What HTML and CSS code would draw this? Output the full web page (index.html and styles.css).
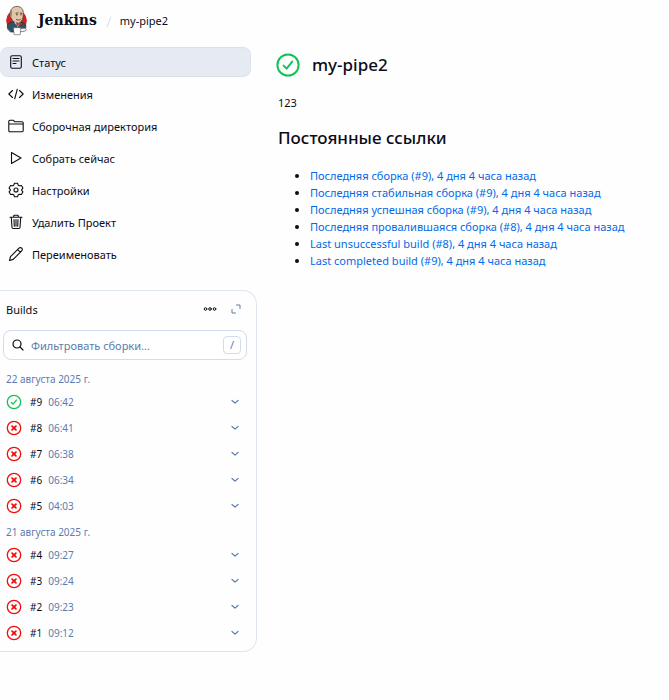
FILE: index.html
```html
<!DOCTYPE html>
<html lang="ru">
<head>
<meta charset="utf-8">
<meta name="viewport" content="width=device-width, initial-scale=1">
<title>my-pipe2 [Jenkins]</title>
<link rel="stylesheet" href="styles.css">
</head>
<body>
<svg class="sprite" aria-hidden="true">
  <symbol id="ok" viewBox="0 0 24 24"><circle cx="12" cy="12" r="10.6"/><path d="M7.6 12.6l3 3 5.6-7"/></symbol>
  <symbol id="fail" viewBox="0 0 16 16"><circle cx="8" cy="8" r="6.7"/><path class="cross" d="M6.100 6.100l3.800 3.800M9.900 6.100l-3.800 3.800"/></symbol>
  <symbol id="ok-small" viewBox="0 0 16 16"><circle cx="8" cy="8" r="6.7"/><path d="M5.400 8.500l1.700 1.600 3.300-4"/></symbol>
  <symbol id="chevron" viewBox="0 0 8 8"><path d="M1 2.500l3 2.600 3-2.600"/></symbol>
</svg>
<header class="header">
  <a class="brand" href="#">
    <svg class="logo" viewBox="0 0 24 32" aria-hidden="true">
      <ellipse cx="12" cy="16" rx="10.8" ry="11" fill="#d3221d"/>
      <path d="M3 25c-1.500-3-.5-6 3-7l5-1 7 1c3 1 4.500 3 3.500 6l-4 3-5 1H6z" fill="#2f5468" stroke="#1c2e3a" stroke-width=".7"/>
      <path d="M5.300 10C5 4.500 8 1.300 12.500 1.300c4.500 0 7 3.200 6.600 8.200-.2 4-1.100 8-4.600 9-3.500.5-7-1.500-8-5-1-.5-1.500-2-1.200-3.500z" fill="#e3c6a6" stroke="#4a403a" stroke-width=".8"/>
      <path d="M5.300 10c.2-2.500 1-4.500 2-5.500.3 2 .1 4-.3 6l-.3 3c-1-.7-1.500-2-1.400-3.500z" fill="#92867b"/>
      <path d="M11.500 8.500l2-.5M16 8.300l1.500.2M12 10h1M16.300 10h.8M12 15c1.300.8 2.700.8 4 0" fill="none" stroke="#3d302a" stroke-width=".9"/>
      <path d="M9.500 17.500l3.500 5 4-4" fill="#f0f0f0"/>
      <path d="M12 18.200l2.500 1 3-1.200.4 3-3-.8-2.500 1.200z" fill="#d33833" stroke="#641b19" stroke-width=".5"/>
      <path d="M9 23.500h7.500l-.6 7.300h-6z" fill="#fff" stroke="#66666b" stroke-width=".7"/>
      <path d="M16.500 24.500c3-1 5.500-.5 6 1-1 2-4 2.500-6.500 2" fill="#f4f0ea" stroke="#5e5752" stroke-width=".7"/>
    </svg>
    <span class="brand-name">Jenkins</span>
  </a>
  <svg class="slash" viewBox="0 0 6 12" aria-hidden="true"><path d="M5 1L1 11"/></svg>
  <a class="crumb" href="#">my-pipe2</a>
</header>
<div class="layout">
  <aside class="side">
    <nav class="tasks">
      <a class="task active" href="#"><svg viewBox="0 0 16 16"><rect x="2.700" y="1.700" width="10.600" height="12.600" rx="1.500"/><path d="M5 4.500h6M5 7h6M5 9.500h3"/></svg>Статус</a>
      <a class="task" href="#"><svg viewBox="0 0 16 16"><path d="M4.500 4.500L.8 8l3.700 3.500M11.500 4.500l3.700 3.500-3.700 3.500M9.300 3.200l-2.600 9.600"/></svg>Изменения</a>
      <a class="task" href="#"><svg viewBox="0 0 16 16"><path d="M.8 12.500v-9c0-.8.500-1.200 1.200-1.200h3.500l1.500 1.500h7c.7 0 1.200.5 1.200 1.200v7.500c0 .8-.5 1.200-1.200 1.200H2c-.7 0-1.200-.5-1.200-1.200zM.8 6h14.400"/></svg>Сборочная директория</a>
      <a class="task" href="#"><svg viewBox="0 0 16 16"><path d="M3.500 2.600v10.800L13 8z"/></svg>Собрать сейчас</a>
      <a class="task" href="#"><svg viewBox="0 0 16 16"><path d="M6.500 1.300h3l.8 1.900 1.100.6 2-.3 1.500 2.600L13.700 7.700v.6l1.200 1.600-1.500 2.600-2-.3-1.100.6-.8 1.900h-3l-.8-1.900-1.100-.6-2 .3-1.500-2.600 1.200-1.600v-.6L1.100 6.100l1.500-2.600 2 .3 1.100-.6z"/><circle cx="8" cy="8" r="2"/></svg>Настройки</a>
      <a class="task" href="#"><svg viewBox="0 0 16 16"><path d="M2 3.200h12M3.300 3.500l.7 10c.1.700.4 1 1 1h6c.6 0 .9-.3 1-1l.7-10M5.700 3V2c0-.5.300-.8.800-.8h3c.5 0 .8.300.8.800v1M6 5.500l.3 6.800M8 5.500v6.800M10 5.500l-.3 6.800"/></svg>Удалить Проект</a>
      <a class="task" href="#"><svg viewBox="0 0 16 16"><path d="M11 2.200c.8-.8 2-.8 2.700 0s.8 1.900 0 2.700l-8.500 8.500-3.700 1.100 1-3.800zM9.700 3.600l2.700 2.700"/></svg>Переименовать</a>
    </nav>
    <section class="builds">
      <div class="builds-head">
        <h2>Builds</h2>
        <button class="icon-button" type="button" aria-label="Ещё"><svg class="dots" viewBox="0 0 14 6"><circle cx="2.500" cy="3" r="1.300"/><circle cx="7" cy="3" r="1.300"/><circle cx="11.500" cy="3" r="1.300"/></svg></button>
        <button class="icon-button" type="button" aria-label="Развернуть"><svg class="expand" viewBox="0 0 10 10"><path d="M5.500 1H9v3.500M1 5.500V9h3.500"/></svg></button>
      </div>
      <label class="filter">
        <svg viewBox="0 0 12 12" aria-hidden="true"><circle cx="5" cy="5" r="4"/><path d="M8 8l3 3"/></svg>
        <input type="search" aria-label="Фильтровать сборки" placeholder="Фильтровать сборки...">
        <kbd>/</kbd>
      </label>
      <h3>22 августа 2025 г.</h3>
      <ul class="runs">
        <li><svg class="state ok"><use href="#ok-small"/></svg><a href="#">#9</a><time>06:42</time><button type="button" aria-label="Меню #9"><svg><use href="#chevron"/></svg></button></li>
        <li><svg class="state fail"><use href="#fail"/></svg><a href="#">#8</a><time>06:41</time><button type="button" aria-label="Меню #8"><svg><use href="#chevron"/></svg></button></li>
        <li><svg class="state fail"><use href="#fail"/></svg><a href="#">#7</a><time>06:38</time><button type="button" aria-label="Меню #7"><svg><use href="#chevron"/></svg></button></li>
        <li><svg class="state fail"><use href="#fail"/></svg><a href="#">#6</a><time>06:34</time><button type="button" aria-label="Меню #6"><svg><use href="#chevron"/></svg></button></li>
        <li><svg class="state fail"><use href="#fail"/></svg><a href="#">#5</a><time>04:03</time><button type="button" aria-label="Меню #5"><svg><use href="#chevron"/></svg></button></li>
      </ul>
      <h3>21 августа 2025 г.</h3>
      <ul class="runs">
        <li><svg class="state fail"><use href="#fail"/></svg><a href="#">#4</a><time>09:27</time><button type="button" aria-label="Меню #4"><svg><use href="#chevron"/></svg></button></li>
        <li><svg class="state fail"><use href="#fail"/></svg><a href="#">#3</a><time>09:24</time><button type="button" aria-label="Меню #3"><svg><use href="#chevron"/></svg></button></li>
        <li><svg class="state fail"><use href="#fail"/></svg><a href="#">#2</a><time>09:23</time><button type="button" aria-label="Меню #2"><svg><use href="#chevron"/></svg></button></li>
        <li><svg class="state fail"><use href="#fail"/></svg><a href="#">#1</a><time>09:12</time><button type="button" aria-label="Меню #1"><svg><use href="#chevron"/></svg></button></li>
      </ul>
    </section>
  </aside>
  <main class="main">
    <h1><svg class="ok" aria-hidden="true"><use href="#ok"/></svg>my-pipe2</h1>
    <p>123</p>
    <h2>Постоянные ссылки</h2>
    <ul class="links">
      <li><a href="#">Последняя сборка (#9), 4 дня 4 часа назад</a></li>
      <li><a href="#">Последняя стабильная сборка (#9), 4 дня 4 часа назад</a></li>
      <li><a href="#">Последняя успешная сборка (#9), 4 дня 4 часа назад</a></li>
      <li><a href="#">Последняя провалившаяся сборка (#8), 4 дня 4 часа назад</a></li>
      <li><a href="#">Last unsuccessful build (#8), 4 дня 4 часа назад</a></li>
      <li><a href="#">Last completed build (#9), 4 дня 4 часа назад</a></li>
    </ul>
  </main>
</div>
</body>
</html>
```
FILE: styles.css
```css
:root {
  --text: #0c0c18;
  --muted: #5a7cae;
  --line: #dfe4f1;
  --link: #006ae8;
}
* { box-sizing: border-box; }
body {
  margin: 0;
  background: #fefefe;
  color: var(--text);
  font: 11px/17px "Noto Sans", "Open Sans", sans-serif;
}
a { color: inherit; text-decoration: none; }
h1, h2, h3, p, ul { margin: 0; padding: 0; font-weight: 400; }
svg { display: block; flex: none; fill: none; stroke: currentColor; stroke-linecap: round; stroke-linejoin: round; }
button { display: grid; place-items: center; padding: 0; border: 0; background: none; color: inherit; cursor: pointer; }
.sprite { position: absolute; width: 0; height: 0; }

.header { display: flex; align-items: center; height: 40px; padding-left: 5px; }
.brand { display: flex; align-items: center; gap: 10px; }
.logo { width: 23px; height: 31px; stroke: none; }
.brand-name { font: bold 14px/20px "DejaVu Serif", serif; }
.slash { width: 6px; height: 12px; margin: 4px 8px 0 9px; color: #d5dbe8; }

.layout { display: grid; grid-template-columns: 257px minmax(0, 1fr); align-items: start; }
.tasks { display: grid; gap: 2px; padding: 7px 6px 0 0; }
.task {
  display: flex; align-items: center; gap: 8px; height: 30px; padding-left: 8px;
  border: 1px solid transparent; border-left: 0; border-radius: 8px;
}
.task.active { background: #e6eaf2; border-color: #dbe1ec; }
.task svg { width: 16px; height: 16px; stroke-width: 1.1; }

.builds {
  margin-top: 21px; padding: 5px 9px 5px 3px;
  border: 1px solid var(--line); border-left: 0; border-radius: 0 14px 14px 0;
}
.builds-head { display: flex; align-items: center; height: 26px; padding-left: 3px; }
.builds-head h2 { flex: 1; font-size: 11px; line-height: 17px; }
.icon-button { width: 26px; height: 26px; }
.icon-button:last-child { color: var(--muted); margin-right: -2px; }
.dots { width: 14px; height: 6px; }
.expand { width: 10px; height: 10px; }
.filter {
  display: flex; align-items: center; gap: 7px; height: 30px; margin: 8px 0 10px;
  padding: 0 5px 0 8px; border: 1px solid #d3dcea; border-radius: 8px; background: #fff;
}
.filter svg { width: 12px; height: 12px; stroke-width: 1.2; }
.filter input { flex: 1; min-width: 0; padding: 0; border: 0; outline: 0; background: none; font: inherit; color: inherit; }
.filter input::placeholder { color: var(--muted); opacity: 1; }
.filter kbd {
  width: 18px; height: 18px; border: 1px solid #d3dcea; border-radius: 4px;
  font: inherit; line-height: 16px; text-align: center; color: var(--muted);
}
.builds h3 { padding: 0 3px; font-size: 10px; line-height: 19px; color: var(--muted); }
.runs { list-style: none; }
.runs + h3 { margin-top: 4px; }
.runs li { display: flex; align-items: center; height: 26px; padding: 0 3px; font-size: 10px; }
.runs a { margin: 0 6px 0 8px; }
.runs time { flex: 1; color: var(--muted); }
.runs button { width: 18px; height: 18px; color: var(--muted); }
.runs button svg { width: 8px; height: 8px; stroke-width: 1.2; }
.state { width: 16px; height: 16px; stroke-width: 1.3; }
.ok { color: #13c159; }
.fail { color: #f20d0d; }
.cross { stroke-width: 1.8; }

.main { padding: 11px 16px 0 21px; }
.main h1 { display: flex; align-items: center; gap: 12px; margin-left: -2px; font-size: 17px; line-height: 28px; font-weight: 500; }
.main h1 svg { width: 24px; height: 24px; stroke-width: 2; }
.main p { margin: 15px 0; }
.main h2 { font-size: 17px; line-height: 24px; font-weight: 500; }
.links { margin-top: 17px; padding-left: 32px; }
.links a { color: var(--link); }
```
